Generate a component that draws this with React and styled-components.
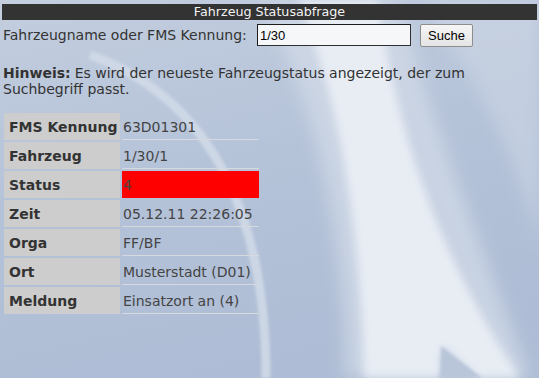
import React from "react";
import styled, { createGlobalStyle } from "styled-components";

const Global = createGlobalStyle`
  html, body { margin: 0; padding: 0; }
  body {
    background: #b4c2d8;
    font-family: "DejaVu Sans", "Liberation Sans", sans-serif;
    color: #333;
    overflow: hidden;
  }
`;

const Page = styled.div`
  position: relative;
  width: 539px;
  height: 378px;
  padding: 4px 2px 0;
  box-sizing: border-box;
  overflow: hidden;
`;

const Backdrop = styled.svg`
  position: absolute;
  left: 0;
  top: 0;
  width: 539px;
  height: 378px;
  z-index: 0;
`;

const Content = styled.div`
  position: relative;
  z-index: 1;
  display: flex;
  flex-direction: column;
`;

const TitleBar = styled.div`
  height: 16px;
  line-height: 16px;
  background: #333333;
  color: #f2f2f2;
  font-size: 12.7px;
  text-align: center;
`;

const SearchRow = styled.form`
  display: flex;
  align-items: flex-start;
  margin-top: 4px;
  height: 23px;
`;

const SearchLabel = styled.label`
  font-size: 14px;
  line-height: 22px;
  color: #333;
  padding-left: 1px;
  width: 254px;
`;

const TextInput = styled.input`
  box-sizing: border-box;
  width: 154px;
  height: 22px;
  margin: 0;
  padding: 0 2px;
  border: 1px solid #2e2e2e;
  border-top-color: #1c1c1c;
  border-left-color: #1c1c1c;
  background: #f6f7f9;
  font-family: "Liberation Sans", Arial, sans-serif;
  font-size: 13px;
  color: #000;
  outline: none;
`;

const Button = styled.button`
  box-sizing: border-box;
  margin-left: 9px;
  width: 53px;
  height: 23px;
  padding: 0;
  border: 1px solid #8d8d8d;
  border-radius: 2px;
  background: linear-gradient(#f6f6f6, #e4e4e4);
  font-family: "Liberation Sans", Arial, sans-serif;
  font-size: 13px;
  color: #000;
`;

const Hint = styled.p`
  margin: 18px 0 0;
  padding-left: 1px;
  font-size: 14px;
  line-height: 16px;
  color: #333;
  width: 490px;
`;

const HintLead = styled.strong`
  font-weight: bold;
  margin-right: 4px;
`;

const Grid = styled.div`
  display: grid;
  grid-template-columns: 116px 137px;
  grid-auto-rows: 27px;
  gap: 2px;
  margin: 16px 0 0 2px;
`;

const LabelCell = styled.div`
  background: #cdcdcd;
  font-weight: bold;
  font-size: 14px;
  color: #333;
  display: flex;
  align-items: center;
  padding-left: 5px;
  padding-top: 1px;
  white-space: nowrap;
`;

const ValueCell = styled.div`
  box-sizing: border-box;
  background: ${(p) => (p.$alert ? "#ff0000" : "transparent")};
  border-bottom: 1px solid ${(p) => (p.$alert ? "#ff0000" : "#d6d9de")};
  font-size: 14px;
  color: #444;
  display: flex;
  align-items: center;
  padding-left: 1px;
  padding-top: 1px;
  white-space: nowrap;
`;

const rows = [
  ["FMS Kennung", "63D01301"],
  ["Fahrzeug", "1/30/1"],
  ["Status", "4", true],
  ["Zeit", "05.12.11 22:26:05"],
  ["Orga", "FF/BF"],
  ["Ort", "Musterstadt (D01)"],
  ["Meldung", "Einsatzort an (4)"],
];

function Background() {
  return (
    <Backdrop viewBox="0 0 539 378" aria-hidden="true">
      <defs>
        <linearGradient id="base" x1="0" y1="0" x2="0.3" y2="1">
          <stop offset="0" stopColor="#c3cede" />
          <stop offset="0.5" stopColor="#b5c3d9" />
          <stop offset="1" stopColor="#aebdd5" />
        </linearGradient>
        <filter id="blur8"><feGaussianBlur stdDeviation="8" /></filter>
        <filter id="blur4"><feGaussianBlur stdDeviation="4" /></filter>
        <filter id="blur2"><feGaussianBlur stdDeviation="1.5" /></filter>
      </defs>
      <rect width="539" height="378" fill="url(#base)" />
      <path
        d="M420 0 L539 0 L539 250 C520 150 470 70 420 0 Z"
        fill="#cfd8e6"
        opacity="0.55"
        filter="url(#blur8)"
      />
      <path
        d="M260 0 L400 0 C430 120 480 240 530 378 L345 378 C345 250 320 110 260 0 Z"
        fill="#d3dbe8"
        opacity="0.7"
        filter="url(#blur8)"
      />
      <path
        d="M298 0 L378 0 C398 140 442 260 520 378 L478 378 L442 345 L440 378 L364 378 C361 250 344 110 298 0 Z"
        fill="#e8edf4"
        filter="url(#blur4)"
      />
      <path d="M441 346 L482 378 L440 378 Z" fill="#b9c6da" filter="url(#blur2)" />
      <path
        d="M90 55 C215 100 266 220 266 378"
        fill="none"
        stroke="#d2dbe8"
        strokeWidth="9"
        opacity="0.85"
        filter="url(#blur2)"
      />
    </Backdrop>
  );
}

export default function App() {
  return (
    <>
      <Global />
      <Page>
        <Background />
        <Content>
          <TitleBar>Fahrzeug Statusabfrage</TitleBar>
          <SearchRow onSubmit={(e) => e.preventDefault()}>
            <SearchLabel htmlFor="q">Fahrzeugname oder FMS Kennung:</SearchLabel>
            <TextInput id="q" defaultValue="1/30" />
            <Button type="submit">Suche</Button>
          </SearchRow>
          <Hint>
            <HintLead>Hinweis:</HintLead>Es wird der neueste Fahrzeugstatus angezeigt, der zum
            Suchbegriff passt.
          </Hint>
          <Grid>
            {rows.map(([k, v, alert]) => (
              <React.Fragment key={k}>
                <LabelCell>{k}</LabelCell>
                <ValueCell $alert={alert}>{v}</ValueCell>
              </React.Fragment>
            ))}
          </Grid>
        </Content>
      </Page>
    </>
  );
}
